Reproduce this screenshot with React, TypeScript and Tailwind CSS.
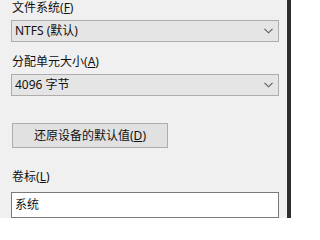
import React from "react";

const FONT = "font-['Noto_Sans','Noto_Sans_CJK_SC',sans-serif]";

const Chevron: React.FC = () => (
  <svg width="9" height="6" viewBox="0 0 9 6" className="shrink-0">
    <path d="M0.5 0.8 L4.5 4.8 L8.5 0.8" fill="none" stroke="#5a5a5a" strokeWidth="1.1" />
  </svg>
);

const Select: React.FC<{ value: string }> = ({ value }) => (
  <div className="h-[22px] w-[268px] bg-[#e5e5e5] border border-[#adadad] flex items-center justify-between pl-[3px] pr-[5px]">
    <span className="text-[12px] leading-none text-[#111]">{value}</span>
    <Chevron />
  </div>
);

const Label: React.FC<{ text: string; hot: string }> = ({ text, hot }) => (
  <div className="h-[16px] text-[12px] leading-[16px] text-[#111] pl-px">
    {text}(<u className="underline-offset-1">{hot}</u>)
  </div>
);

export default function App() {
  return (
    <div className={`w-[291px] h-[218px] bg-[#f0f0f0] flex overflow-hidden ${FONT}`}>
      {/* Format options column */}
      <div className="w-[287px] pl-[11px] flex flex-col">
        <Label text="文件系统" hot="F" />
        <div className="mt-[4px]">
          <Select value="NTFS (默认)" />
        </div>

        <div className="mt-[12px]">
          <Label text="分配单元大小" hot="A" />
        </div>
        <div className="mt-[4px]">
          <Select value="4096 字节" />
        </div>

        <button className="mt-[27px] ml-px w-[156px] h-[25px] bg-[#e1e1e1] border border-[#adadad] text-[12px] leading-none text-[#111] flex items-center justify-center">
          还原设备的默认值(<u className="underline-offset-1">D</u>)
        </button>

        <div className="mt-[21px]">
          <Label text="卷标" hot="L" />
        </div>
        <div className="mt-[7px] h-[26px] w-[268px] bg-white border border-[#7a7a7a] flex items-center pl-[3px]">
          <span className="text-[12px] leading-none text-[#111]">系统</span>
        </div>
      </div>

      {/* Window edge */}
      <div className="w-[4px] h-full bg-[#2e2e2e]" />
    </div>
  );
}
